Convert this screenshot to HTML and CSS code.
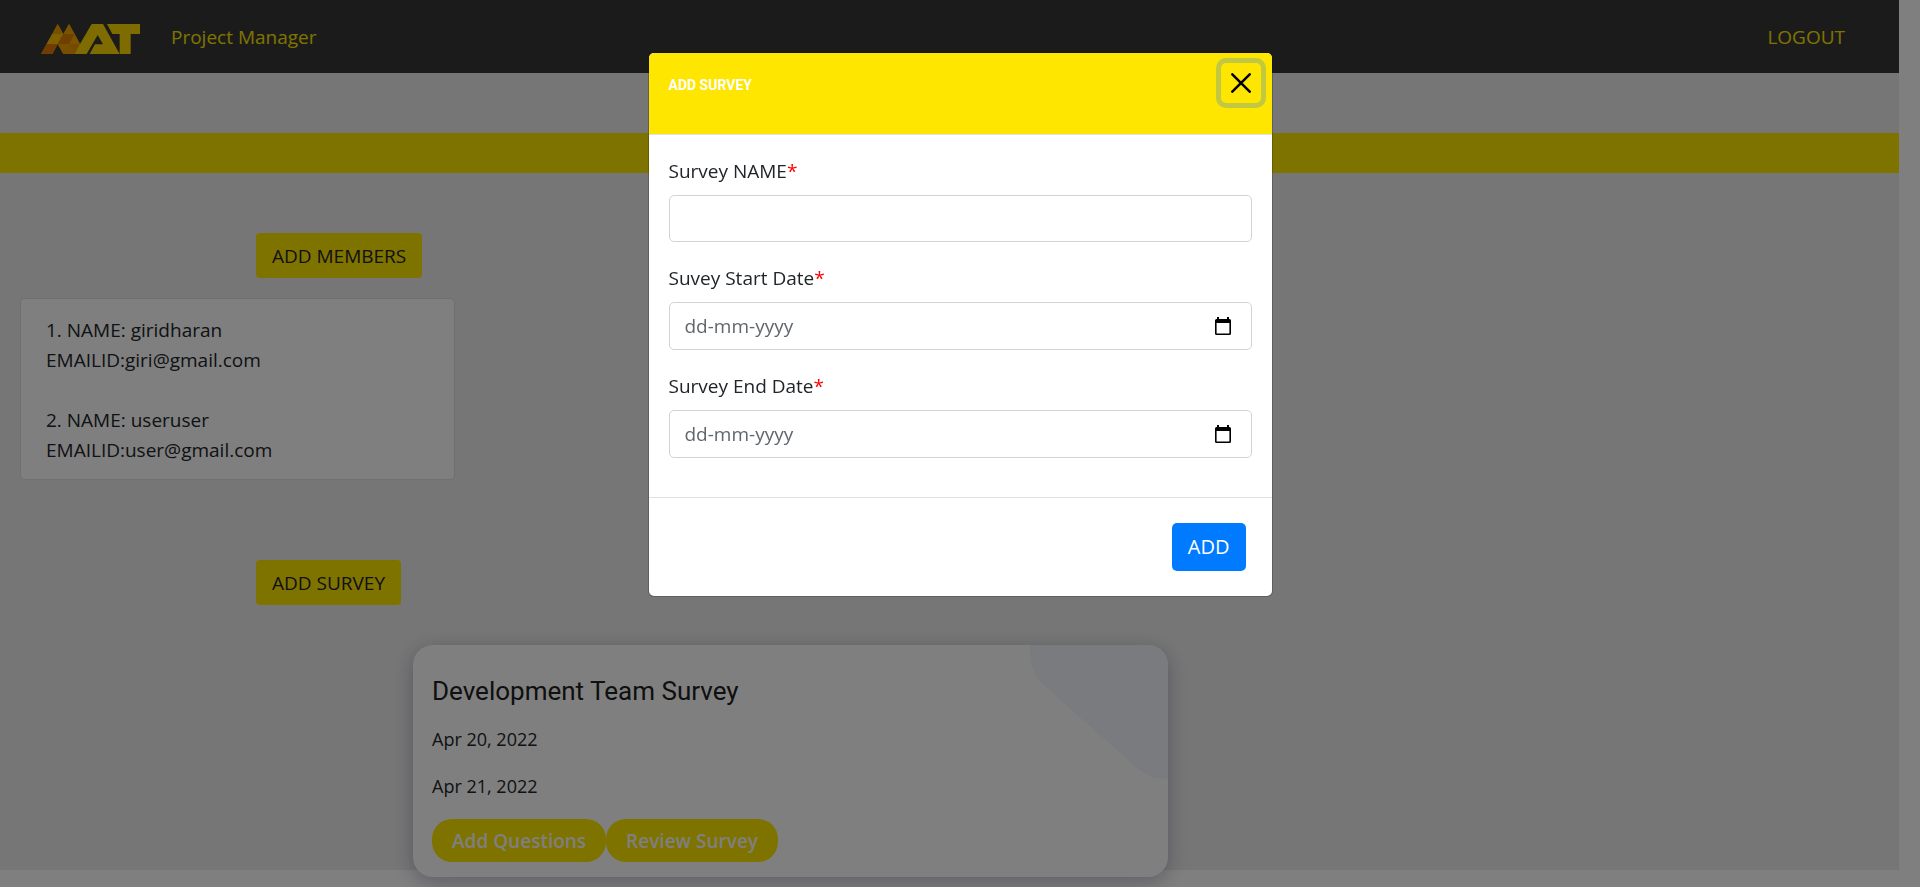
FILE: index.html
```html
<!DOCTYPE html>
<html lang="en">
<head>
<meta charset="utf-8">
<title>Project Manager</title>
<link rel="stylesheet" href="styles.css">
</head>
<body>
<div class="page">
  <header class="navbar">
    <svg class="logo" viewBox="0 0 297 90" role="img" aria-label="MAT">
      <polygon points="50,0 0,90 34,90 67,30" fill="#e8a000"/>
      <polygon points="84,0 50,60 67,90 134,90" fill="#e8a000"/>
      <polygon points="50,0 67,30 34,30" fill="#eda000"/>
      <polygon points="84,0 101,30 67,30" fill="#eda800"/>
      <polygon points="34,30 67,30 50,60 17,60" fill="#ffc400"/>
      <polygon points="17,60 50,60 34,90 0,90" fill="#e07800"/>
      <polygon points="50,60 67,30 101,30 84,60" fill="#e08000"/>
      <polygon points="101,30 117,60 84,60" fill="#f0a800"/>
      <polygon points="50,60 84,60 67,90" fill="#f0a000"/>
      <polygon points="84,60 117,60 134,90 101,90" fill="#ec9400"/>
      <path d="M152 0H186L236 90H146L162 61H186L170 33L137 90H101L117 60Z" fill="#ffd800"/>
      <path d="M198 0H297V30H269V90H236V30H214Z" fill="#ffd800"/>
    </svg>
    <span class="brand">Project Manager</span>
    <a class="logout" href="#">LOGOUT</a>
  </header>
  <div class="stripe"></div>
  <main class="content">
    <button class="action" type="button">ADD MEMBERS</button>
    <section class="members">
      <p>1. NAME: giridharan<br>EMAILID:giri@gmail.com</p>
      <p>2. NAME: useruser<br>EMAILID:user@gmail.com</p>
    </section>
    <button class="action" type="button">ADD SURVEY</button>
    <article class="survey">
      <svg class="blob" viewBox="0 0 138 134" aria-hidden="true"><path d="M0 0V8C0 22 6 34 17 43L108 124C117 131 126 134 138 134V0Z" fill="#f4f6fe"/></svg>
      <h2>Development Team Survey</h2>
      <p>Apr 20, 2022</p>
      <p>Apr 21, 2022</p>
      <div class="pills">
        <button class="pill" type="button">Add Questions</button>
        <button class="pill" type="button">Review Survey</button>
      </div>
    </article>
  </main>
</div>
<div class="backdrop">
  <form class="modal" role="dialog" aria-labelledby="modal-title">
    <div class="modal-header">
      <h1 id="modal-title">ADD SURVEY</h1>
      <button class="close" type="button" aria-label="Close">
        <svg viewBox="0 0 20 20" aria-hidden="true"><path d="M1.3 1.3L18.7 18.7M18.7 1.3L1.3 18.7"/></svg>
      </button>
    </div>
    <div class="modal-body">
      <div class="group">
        <label for="name">Survey NAME<span class="req">*</span></label>
        <input class="field" id="name" type="text">
      </div>
      <div class="group">
        <label for="start">Suvey Start Date<span class="req">*</span></label>
        <div class="field date">
          <input id="start" type="text" placeholder="dd-mm-yyyy">
          <button type="button" aria-label="Pick start date"><svg viewBox="0 0 16 18" aria-hidden="true"><path d="M2 0H4V2H12V0H14V2H14.500Q16 2 16 3.500V16.500Q16 18 14.500 18H1.500Q0 18 0 16.500V3.500Q0 2 1.500 2H2ZM1.600 6V16.400H14.400V6Z" fill-rule="evenodd"/></svg></button>
        </div>
      </div>
      <div class="group">
        <label for="end">Survey End Date<span class="req">*</span></label>
        <div class="field date">
          <input id="end" type="text" placeholder="dd-mm-yyyy">
          <button type="button" aria-label="Pick end date"><svg viewBox="0 0 16 18" aria-hidden="true"><path d="M2 0H4V2H12V0H14V2H14.500Q16 2 16 3.500V16.500Q16 18 14.500 18H1.500Q0 18 0 16.500V3.500Q0 2 1.500 2H2ZM1.600 6V16.400H14.400V6Z" fill-rule="evenodd"/></svg></button>
        </div>
      </div>
    </div>
    <div class="modal-footer">
      <button class="submit" type="submit">ADD</button>
    </div>
  </form>
</div>
</body>
</html>
```
FILE: styles.css
```css
* {
  box-sizing: border-box;
}

body {
  min-height: 100vh;
  margin: 0;
  padding: 0 21px 17px 0;
  background: #fff;
  color: #212529;
  font: 19px/30px "Open Sans", "Noto Sans", sans-serif;
}

button,
input {
  font: inherit;
}

h1,
h2,
p {
  margin: 0;
}

.page {
  display: flow-root;
  background: #ededed;
}

.navbar {
  display: flex;
  align-items: center;
  height: 73px;
  padding: 0 54px 0 41px;
  background: #363636;
  color: #ffe600;
}

.logo {
  width: 99px;
  height: 30px;
  margin-top: 4px;
}

.brand {
  margin-left: 31px;
}

.logout {
  margin-left: auto;
  color: inherit;
  text-decoration: none;
}

.stripe {
  height: 40px;
  margin-top: 60px;
  background: #ffe600;
}

.content {
  padding-top: 60px;
}

.action {
  display: block;
  height: 45px;
  margin-left: 256px;
  padding: 0 16px;
  border: 0;
  border-radius: 4px;
  background: #ffe600;
  color: #212529;
}

.members {
  display: grid;
  gap: 30px;
  max-width: 435px;
  margin: 20px 0 80px 20px;
  padding: 16px 25px 14px;
  border: 1px solid #dfdfdf;
  border-radius: 5px;
  background: #fff;
}

.survey {
  position: relative;
  max-width: 755px;
  margin: 40px 0 -7px 413px;
  padding: 28px 19px 15px;
  overflow: hidden;
  border-radius: 20px;
  background: #fff;
  box-shadow: 0 5px 20px rgba(34, 35, 88, 0.3);
}

.blob {
  position: absolute;
  top: 0;
  right: 0;
  width: 138px;
  height: 134px;
}

.survey h2 {
  margin-bottom: 15px;
  color: #212121;
  font: 400 26px/36px Roboto, sans-serif;
}

.survey p {
  margin-bottom: 17px;
  font-size: 18px;
}

.pills {
  display: flex;
  padding-top: 1px;
}

.pill {
  height: 43px;
  padding: 0 20px;
  border: 0;
  border-radius: 20px;
  background: #ffe600;
  color: #fff;
  font-weight: 600;
}

.backdrop {
  position: fixed;
  inset: 0;
  padding: 52px 16px;
  background: rgba(0, 0, 0, 0.5);
}

.modal {
  max-width: 625px;
  margin: 0 auto;
  overflow: hidden;
  border: 1px solid rgba(0, 0, 0, 0.2);
  border-radius: 6px;
  background: #fff;
  background-clip: padding-box;
}

.modal-header {
  display: flex;
  align-items: flex-start;
  justify-content: space-between;
  height: 82px;
  padding: 10px 11px 0 20px;
  border-bottom: 1px solid #dee2e6;
  background: #ffe600;
}

.modal-header h1 {
  margin-top: 7px;
  color: #fff;
  font: 700 14px/30px Roboto, sans-serif;
}

.close {
  display: grid;
  place-items: center;
  width: 40px;
  height: 40px;
  padding: 0;
  border: 0;
  border-radius: 5px;
  background: transparent;
  box-shadow: 0 0 0 5px rgba(13, 110, 253, 0.25);
}

.close svg {
  width: 20px;
  height: 20px;
  fill: none;
  stroke: #000;
  stroke-width: 2.5;
  stroke-linecap: round;
}

.modal-body {
  display: grid;
  gap: 21px;
  padding: 21px 20px 39px;
}

.group {
  display: grid;
  gap: 9px;
}

.req {
  color: #f00;
}

.field {
  width: 100%;
  height: 47px;
  padding: 0 15px;
  border: 1px solid #ced4da;
  border-radius: 5px;
  background: #fff;
}

.date {
  display: flex;
  align-items: center;
  height: 48px;
  padding-right: 20px;
}

.date input {
  flex: 1;
  min-width: 0;
  padding: 0;
  border: 0;
  background: transparent;
}

.date input::placeholder {
  color: #60666c;
  opacity: 1;
}

.date button {
  display: grid;
  padding: 0;
  border: 0;
  background: transparent;
}

.date svg {
  width: 16px;
  height: 18px;
}

.modal-footer {
  display: flex;
  justify-content: flex-end;
  padding: 25px 26px 25px 25px;
  border-top: 1px solid #dee2e6;
}

.submit {
  height: 48px;
  padding: 0 16px;
  border: 0;
  border-radius: 5px;
  background: #007bff;
  color: #fff;
  font-size: 20px;
  font-weight: 500;
}
```
